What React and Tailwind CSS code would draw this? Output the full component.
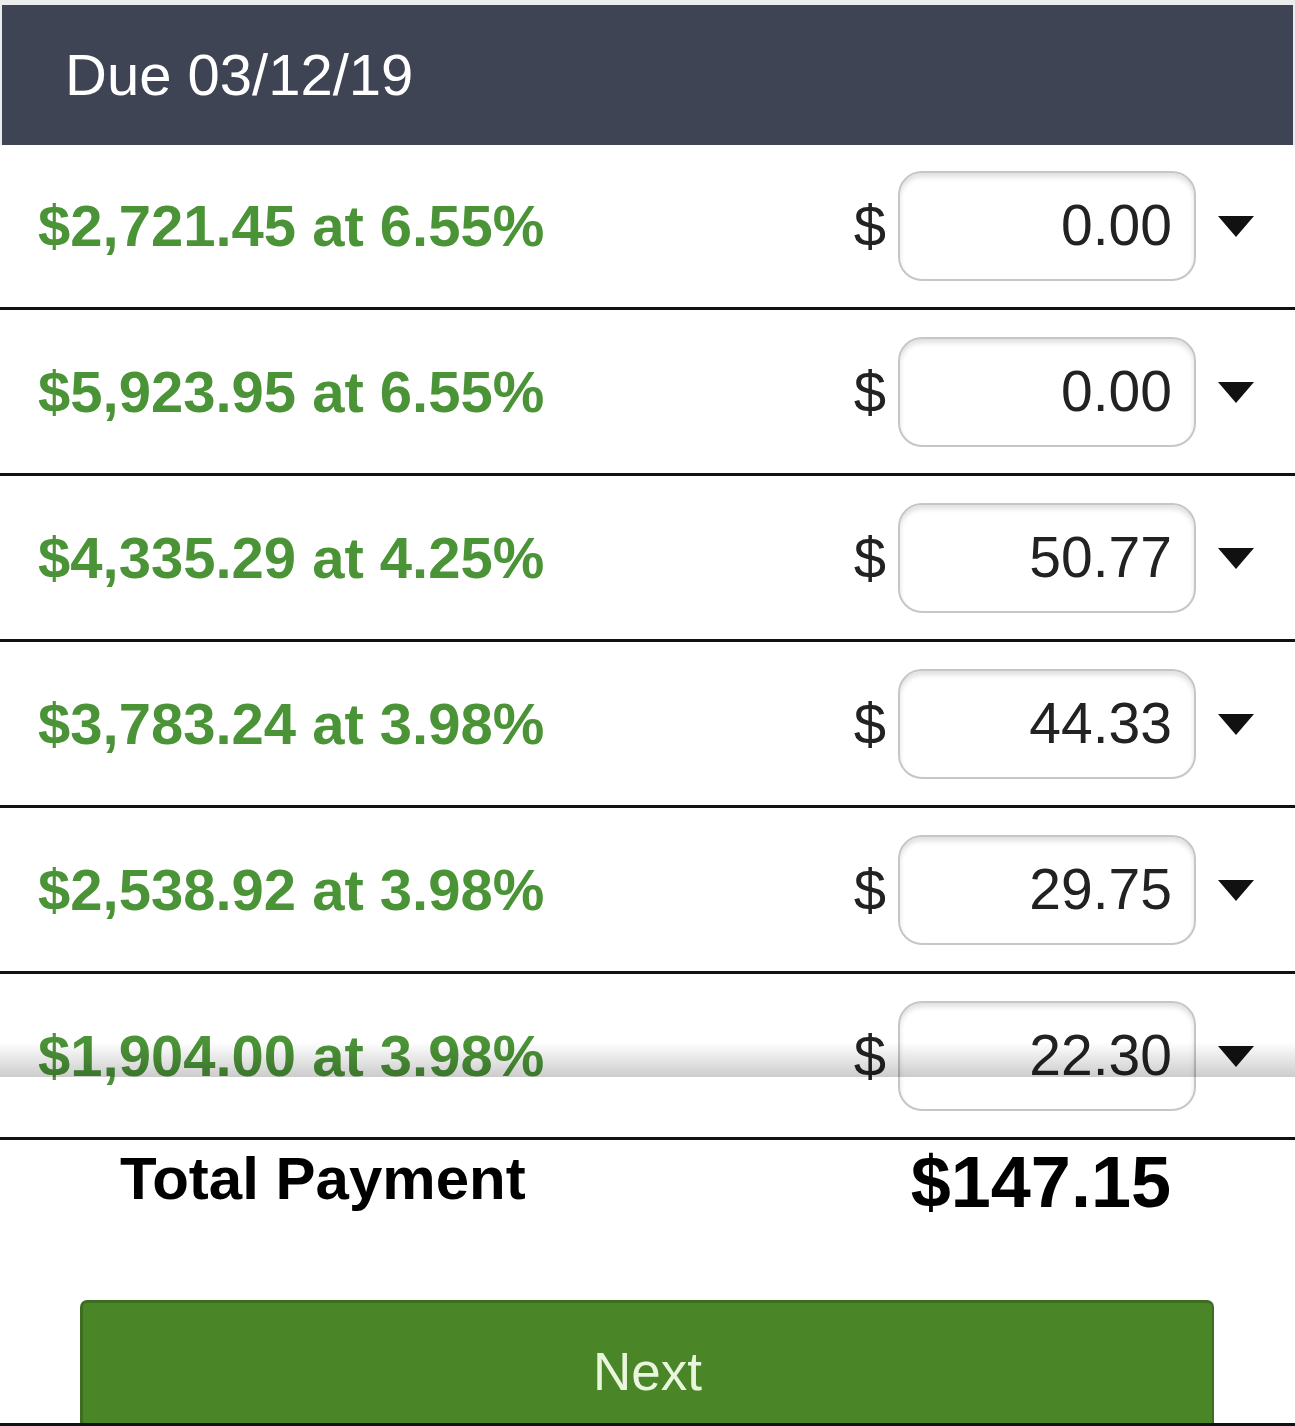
import React from "react";

const rows = [
  { loan: "$2,721.45 at 6.55%", amount: "0.00" },
  { loan: "$5,923.95 at 6.55%", amount: "0.00" },
  { loan: "$4,335.29 at 4.25%", amount: "50.77" },
  { loan: "$3,783.24 at 3.98%", amount: "44.33" },
  { loan: "$2,538.92 at 3.98%", amount: "29.75" },
  { loan: "$1,904.00 at 3.98%", amount: "22.30" },
];

const Caret = () => (
  <svg width="36" height="22" viewBox="0 0 36 22" className="block">
    <polygon points="0,1 36,1 18,22" fill="#111" />
  </svg>
);

const PaymentRow = ({ loan, amount }) => (
  <div className="flex items-center h-[166px] border-b-[3px] border-[#111] pl-[38px] pr-[41px]">
    {/* Loan label */}
    <span className="text-[58px] font-bold text-[#4b9337] leading-none">{loan}</span>

    <div className="ml-auto flex items-center">
      <span className="text-[58px] text-[#222] leading-none mr-[12px]">$</span>
      <div className="w-[298px] h-[110px] rounded-[24px] border-2 border-[#c6c6c6] bg-white shadow-[inset_0_4px_5px_rgba(0,0,0,0.12)] flex items-center justify-end pr-[22px]">
        <span className="text-[57px] text-[#222] leading-none">{amount}</span>
      </div>
      <div className="ml-[22px]">
        <Caret />
      </div>
    </div>
  </div>
);

export default function App() {
  return (
    <div className="relative w-[1295px] h-[1426px] bg-white overflow-hidden" style={{ fontFamily: '"Liberation Sans", Arial, sans-serif' }}>
      {/* Header */}
      <div className="pt-[5px] px-[2px] bg-[#ececec]">
        <div className="h-[140px] bg-[#3e4454] flex items-center pl-[63px]">
          <span className="text-[58px] text-white leading-none">Due 03/12/19</span>
        </div>
      </div>

      {/* Loan rows */}
      <div className="-mt-[1px]">
        {rows.map((r) => (
          <PaymentRow key={r.loan} {...r} />
        ))}
      </div>

      {/* Footer shadow over last row */}
      <div className="absolute left-0 right-0 top-[1042px] h-[35px] bg-gradient-to-b from-transparent to-black/20 pointer-events-none" />

      {/* Total */}
      <div className="flex items-start justify-between pl-[120px] pr-[124px] pt-[6px]">
        <span className="text-[60px] font-bold text-black leading-none mt-[3px]">Total Payment</span>
        <span className="text-[72px] font-bold text-black leading-none">$147.15</span>
      </div>

      {/* Next button */}
      <div className="absolute left-0 right-0 bottom-0 border-b-[3px] border-[#111]">
        <div className="mx-[80px] w-[1134px] h-[123px] bg-[#4a8527] border-t-[3px] border-l-[3px] border-r-[2px] border-[#3d6e20] rounded-t-[7px] flex justify-center pt-[42px]">
          <span className="text-[53px] text-[#e9f6dc] leading-none">Next</span>
        </div>
      </div>
    </div>
  );
}
